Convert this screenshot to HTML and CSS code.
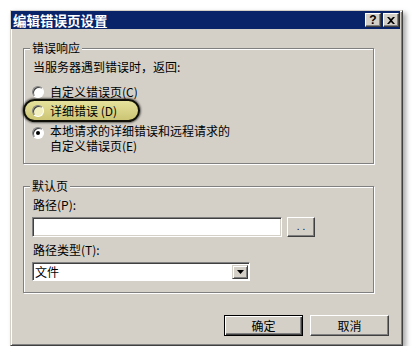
FILE: index.html
```html
<!DOCTYPE html>
<html lang="zh-CN">
<head>
  <meta charset="UTF-8">
  <title>编辑错误页设置</title>
  <link rel="stylesheet" href="styles.css">
</head>
<body>
  <div class="dlg">
    <div class="dlg-title">
      <span class="dlg-title-text">编辑错误页设置</span>
      <span class="cap-btns">
        <span class="cap-btn">?</span>
        <span class="cap-btn">
          <svg width="8" height="7" viewBox="0 0 8 7"><path d="M0 0h2l2 2 2-2h2L5 3.5 8 7H6L4 5 2 7H0l3-3.5z" fill="#000"/></svg>
        </span>
      </span>
    </div>

    <div class="dlg-body">
      <fieldset class="grp grp-resp">
        <legend>错误响应</legend>
        <p class="grp-note">当服务器遇到错误时，返回:</p>
        <label class="opt"><span class="radio"></span>自定义错误页(C)</label>
        <label class="opt opt-hl"><span class="radio radio-hl"></span>详细错误 (D)</label>
        <label class="opt opt-2l"><span class="radio radio-on"></span><span>本地请求的详细错误和远程请求的<br>自定义错误页(E)</span></label>
      </fieldset>

      <fieldset class="grp grp-def">
        <legend>默认页</legend>
        <div class="fld-lbl">路径(P):</div>
        <div class="fld-row">
          <span class="txt"></span>
          <span class="btn btn-dots">. .</span>
        </div>
        <div class="fld-lbl fld-lbl-2">路径类型(T):</div>
        <div class="sel">
          <span class="sel-val">文件</span>
          <span class="sel-arrow">
            <svg width="7" height="4" viewBox="0 0 7 4"><path d="M0 0h7L3.5 4z" fill="#000"/></svg>
          </span>
        </div>
      </fieldset>

      <div class="dlg-btns">
        <span class="btn btn-main">确定</span>
        <span class="btn">取消</span>
      </div>
    </div>
  </div>
</body>
</html>
```

FILE: styles.css
```css
html,body{margin: 0; padding: 0; background-color: #fff;}
*{box-sizing: border-box;}
body{font: 12px/14px "Noto Sans CJK SC", sans-serif; color: #000;}

.dlg {
  margin: 10px 0 0 10px;
  width: 393px;
  height: 336px;
  background-color: #d4d0c8;
  border: 1px solid;
  border-color: #d4d0c8 #404040 #404040 #d4d0c8;
  box-shadow: inset 1px 1px #fff, inset -1px -1px #808080, 3px 3px 5px rgba(0,0,0,0.35);
  display: flex;
  flex-direction: column;
}

/* title bar */
.dlg-title {
  height: 18px;
  margin-right: 2px;
  padding: 0 1px 0 2px;
  background-color: #0a246a;
  display: flex;
  align-items: center;
  justify-content: space-between;
}
.dlg-title-text {color: #fff; font-weight: bold; font-size: 13.5px; line-height: 18px;}
.cap-btns {display: flex; gap: 2px;}
.cap-btn {
  width: 16px;
  height: 14px;
  background-color: #d4d0c8;
  border: 1px solid;
  border-color: #fff #404040 #404040 #fff;
  box-shadow: inset -1px -1px #808080;
  display: flex;
  align-items: center;
  justify-content: center;
  font: bold 12px/12px "Liberation Sans", sans-serif;
}

.dlg-body {
  flex: 1;
  padding: 12px 13px 0 12px;
  display: flex;
  flex-direction: column;
}

/* group boxes */
.grp {
  margin: 0;
  width: 351px;
  padding: 0 8px;
  border: 1px solid #808080;
  box-shadow: inset 1px 1px #fff, 1px 1px #fff;
}
.grp legend {
  padding: 0 2px;
  margin-left: -2px;
  background-color: #d4d0c8;
  line-height: 14px;
}
.grp-resp {padding-bottom: 10px;}
.grp-def {margin-top: 15px; padding-bottom: 11px;}

.grp-note {margin: 5px 0 0 1px;}

.opt {display: flex; align-items: center; gap: 6px; height: 14px;}
.opt:first-of-type {margin-top: 11px;}
.opt-hl {
  height: 23px;
  margin: 0 0 0 -9px;
  padding-left: 7px;
  width: 117px;
  border: 2px solid #101008;
  border-radius: 12px;
  background: linear-gradient(#e6e29c, #cbc574);
  box-shadow: 0 0 2px 1px rgba(0,0,0,0.55);
}
.opt-2l {height: auto; align-items: flex-start; margin-top: 1px; line-height: 15px;}
.opt-2l .radio {margin-top: 4px;}

.radio {
  width: 12px;
  height: 12px;
  flex: none;
  border-radius: 50%;
  background-color: #fff;
  border: 1px solid;
  border-color: #808080 #fff #fff #808080;
  box-shadow: inset 1px 1px #404040;
  display: flex;
  align-items: center;
  justify-content: center;
}
.radio-hl {background-color: #f2f0c0;}
.radio-on::after {content: ""; width: 4px; height: 4px; border-radius: 50%; background-color: #000;}

/* default page fields */
.fld-lbl {margin-top: 5px; padding-left: 1px;}
.fld-lbl-2 {margin-top: 6px;}
.fld-row {display: flex; align-items: center; gap: 5px; margin-top: 5px;}
.txt {
  width: 250px;
  height: 20px;
  background-color: #fff;
  border: 1px solid;
  border-color: #808080 #fff #fff #808080;
  box-shadow: inset 1px 1px #404040, inset -1px -1px #d4d0c8;
}
.btn {
  display: flex;
  align-items: center;
  justify-content: center;
  background-color: #d4d0c8;
  border: 1px solid;
  border-color: #fff #404040 #404040 #fff;
  box-shadow: inset -1px -1px #808080;
}
.btn-dots {width: 28px; height: 20px; font: 10px/10px "Liberation Sans", sans-serif;}

.sel {
  margin-top: 5px;
  width: 218px;
  height: 19px;
  display: flex;
  background-color: #fff;
  border: 1px solid;
  border-color: #808080 #fff #fff #808080;
  box-shadow: inset 1px 1px #404040;
  padding: 2px 1px 1px 2px;
}
.sel-val {flex: 1; line-height: 14px;}
.sel-arrow {
  width: 16px;
  display: flex;
  align-items: center;
  justify-content: center;
  background-color: #d4d0c8;
  border: 1px solid;
  border-color: #d4d0c8 #404040 #404040 #d4d0c8;
  box-shadow: inset 1px 1px #fff, inset -1px -1px #808080;
}

/* bottom buttons */
.dlg-btns {display: flex; justify-content: flex-end; gap: 7px; margin-top: 22px;}
.dlg-btns .btn {width: 79px; height: 21px;}
.btn-main {
  border-color: #000;
  box-shadow: inset 1px 1px #fff, inset -1px -1px #404040, inset -2px -2px #808080;
}
```
